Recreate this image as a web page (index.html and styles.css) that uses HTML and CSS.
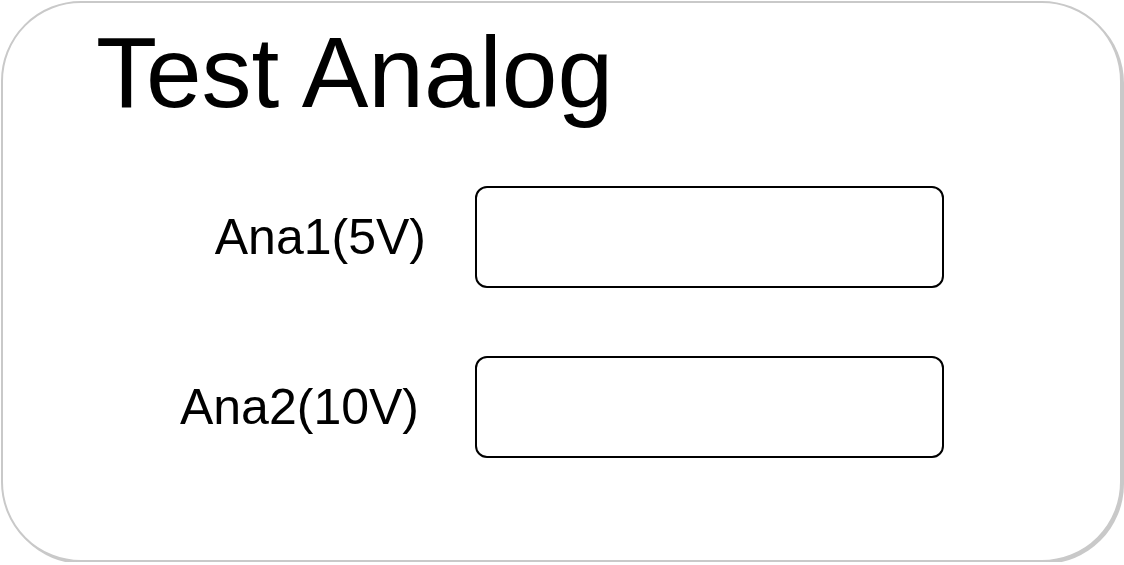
FILE: index.html
```html
<!DOCTYPE html>
<html>
<head>
<meta charset="utf-8">
<link rel="stylesheet" href="styles.css">
</head>
<body>
<div class="card">
  <h1 class="title">Test Analog</h1>
  <div class="fields">
    <div class="row">
      <label class="label">Ana1(5V)</label>
      <div class="box"></div>
    </div>
    <div class="row">
      <label class="label label-wide">Ana2(10V)</label>
      <div class="box"></div>
    </div>
  </div>
</div>
</body>
</html>
```
FILE: styles.css
```css
html, body {
  margin: 0;
  padding: 0;
  background: #ffffff;
}
body {
  font-family: "Liberation Sans", Arial, sans-serif;
  color: #000;
}
.card {
  box-sizing: border-box;
  margin: 1px 0 0 1px;
  width: 1121px;
  height: 561px;
  border: 2px solid #c9c9c9;
  border-radius: 80px;
  box-shadow: 2px 2px 0 #c9c9c9;
  background: #fff;
  padding-top: 19px;
}
.title {
  margin: 0;
  padding-left: 93px;
  font-size: 100px;
  font-weight: normal;
  line-height: 100px;
}
.fields {
  display: flex;
  flex-direction: column;
  gap: 68px;
  margin-top: 64px;
}
.row {
  display: flex;
  align-items: center;
}
.label {
  width: 423px;
  margin-right: 49px;
  text-align: right;
  font-size: 50px;
  line-height: 58px;
}
.label-wide {
  width: 416px;
  margin-right: 56px;
}
.box {
  box-sizing: border-box;
  width: 469px;
  height: 102px;
  border: 2px solid #000;
  border-radius: 12px;
}
```
